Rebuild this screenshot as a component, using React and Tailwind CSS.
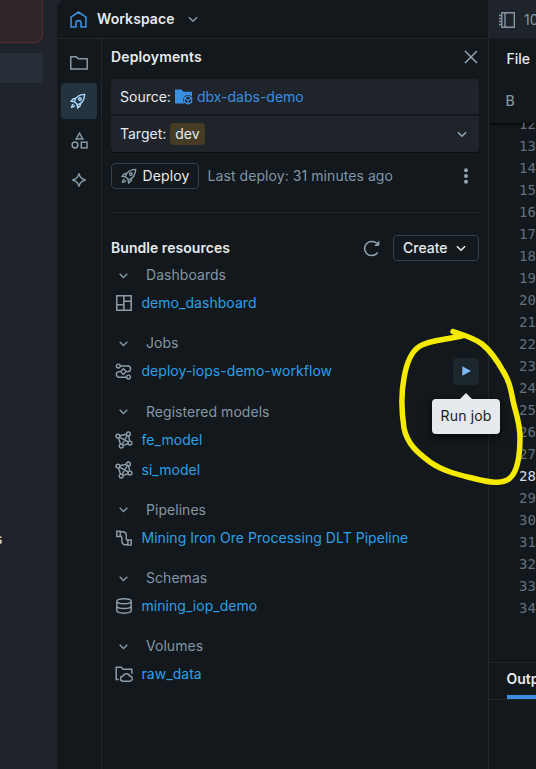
import React from "react";

function Icon({ size = 16, className = "", children, sw = 1.5, box = 16 }) {
  return (
    <svg
      width={size}
      height={size}
      viewBox={`0 0 ${box} ${box}`}
      fill="none"
      stroke="currentColor"
      strokeWidth={sw}
      className={"shrink-0 " + className}
    >
      {children}
    </svg>
  );
}

const Chevron = ({ size = 16, className = "" }) => (
  <Icon size={size} sw={1.6} className={className}>
    <path d="M3.900 6.200L8 10.200l4.100-4" />
  </Icon>
);

const Rocket = ({ className = "" }) => (
  <Icon size={16} sw={1.45} className={className}>
    <path d="M4.300 8.500C5.500 4.800 8.500 1.500 14.600 1.400c-.1 6.100-3.400 9.100-7.100 10.300z" />
    <path d="M6 5.500L3.400 5.700 1.100 8.300l3.400.6M10.500 10l-.2 2.600-2.600 2.300-.6-3.400" />
    <path d="M3.600 11.200c-1.400.4-1.900 1.600-2 3.200 1.600-.1 2.800-.6 3.200-2" />
    <circle cx="9.900" cy="6.100" r="1.300" />
  </Icon>
);

const DashboardIcon = () => (
  <Icon>
    <path d="M.8.800h14.400v14.400H.8zM7.900.800v14.400M.8 9.800h7.100M7.900 6.200h7.300" />
  </Icon>
);

const JobIcon = () => (
  <Icon size={17} box={17} sw={1.45}>
    <circle cx="3.300" cy="3" r="1.900" />
    <circle cx="13.500" cy="14" r="1.900" />
    <path d="M5.200 3h7.600a2.800 2.800 0 010 5.600h-1.600M5.600 8.600H4.200a2.800 2.800 0 000 5.600h7.400" />
    <path d="M8.400 5.800l2.800 2.800-2.800 2.800-2.800-2.800z" />
  </Icon>
);

const ModelIcon = () => (
  <Icon size={18} box={18} sw={1.45}>
    <circle cx="2.900" cy="5.100" r="1.900" />
    <circle cx="13.400" cy="2.900" r="1.900" />
    <circle cx="15" cy="12" r="1.900" />
    <circle cx="6.200" cy="15" r="1.900" />
    <path d="M4.800 4.700l6.700-1.400M13.700 4.800l.9 5.300M4.500 6.100l8.900 4.900M3.500 7l2 6.200M8 14.400l5.100-1.700M12.300 4.500L7 13.300" />
  </Icon>
);

const PipelineIcon = () => (
  <Icon sw={1.45}>
    <path d="M.8 1.300h3.400v5.200H.8zM11.900 10h3.300v5.100h-3.300z" />
    <path d="M4.200 1.700h2.300c2.600 0 3.700 1.400 3.700 3.400v3.600c0 1.100.4 1.700 1.700 1.700M4.200 6c1.300 0 1.700.6 1.700 1.700v3.300c0 2.500 1.300 3.700 3.500 3.700h2.500" />
  </Icon>
);

const SchemaIcon = () => (
  <Icon sw={1.45}>
    <ellipse cx="8" cy="3.300" rx="7.200" ry="2.500" />
    <path d="M.8 3.300v9.300c0 1.500 3.200 2.600 7.200 2.600s7.200-1.100 7.200-2.600V3.300M.8 8c0 1.500 3.200 2.500 7.200 2.500s7.200-1 7.200-2.500" />
  </Icon>
);

const VolumeIcon = () => (
  <Icon size={18} box={18} sw={1.5}>
    <path d="M3.800 14.500H1.200V2.200h5l2 2h8.600v4.500" />
    <path d="M8.300 16.200a2.600 2.600 0 01-.2-5.200 3.500 3.500 0 016.600 0 2.600 2.600 0 01-.1 5.200z" />
  </Icon>
);

const GROUPS = [
  { title: "Dashboards", icon: DashboardIcon, items: ["demo_dashboard"] },
  { title: "Jobs", icon: JobIcon, items: ["deploy-iops-demo-workflow"], run: true },
  { title: "Registered models", icon: ModelIcon, items: ["fe_model", "si_model"] },
  { title: "Pipelines", icon: PipelineIcon, items: ["Mining Iron Ore Processing DLT Pipeline"] },
  { title: "Schemas", icon: SchemaIcon, items: ["mining_iop_demo"] },
  { title: "Volumes", icon: VolumeIcon, items: ["raw_data"] },
];

const LINES = Array.from({ length: 23 }, (_, i) => i + 12);

function RunButton() {
  return (
    <div className="relative ml-auto flex h-[27px] w-[26px] items-center justify-center rounded bg-[#1b262d]">
      <svg width="9" height="10" viewBox="0 0 9 10" className="ml-px">
        <path d="M.3.200v9.600L9 5z" fill="#7cbcf8" />
      </svg>
      <div className="absolute top-[41px] left-1/2 flex h-[35px] w-[68px] -translate-x-1/2 items-center justify-center rounded bg-[#e6e9ed] tracking-[0.01em] text-[#171c21] shadow-[0_3px_10px_rgba(0,0,0,0.7)]">
        <svg width="12" height="6" viewBox="0 0 12 6" className="absolute -top-[5.500px] left-[28px]">
          <path d="M0 6l6-6 6 6z" fill="#e6e9ed" />
        </svg>
        Run job
      </div>
    </div>
  );
}

function Group({ group }) {
  const Glyph = group.icon;
  return (
    <section className="mb-[12.300px]">
      <div className="flex h-[26px] items-center pl-[5px] text-[#8396a5]">
        <Chevron size={15} />
        <span className="ml-[15px] tracking-[0.003em]">{group.title}</span>
      </div>
      {group.items.map((name) => (
        <div key={name} className="flex h-[30px] items-center">
          <span className="flex w-[25px] justify-center text-[#8d9dab]">
            <Glyph />
          </span>
          <span className="ml-[5.5px] tracking-[0.003em] text-[#2ca0ea]">{name}</span>
          {group.run && <RunButton />}
        </div>
      ))}
    </section>
  );
}

function Sidebar() {
  return (
    <aside className="relative flex w-[57px] shrink-0 flex-col bg-[#1f242c]">
      <div className="h-[43px] w-[43px] rounded-br-lg border-r border-b border-[#592a31] bg-[#30252b]" />
      <div className="mt-[10px] h-[30px] w-[43px] rounded-r bg-[#262f37]" />
      <div className="mt-[446px] -ml-[5px] text-[#dfe5ea]">s</div>
    </aside>
  );
}

function Rail() {
  return (
    <nav className="flex w-[45px] shrink-0 flex-col items-center border-r border-[#20272d] pt-[4px] text-[#8599a8]">
      <div className="flex h-[40px] w-9 items-center justify-center pb-px">
        <Icon size={18} sw={1.500} box={18}>
          <path d="M.8 15V2.800h5.500l1.900 2h9V15z" />
        </Icon>
      </div>
      <div className="flex h-9 w-9 items-center justify-center rounded bg-[#233340] pr-[2px] text-[#a9d7fc]">
        <Rocket />
      </div>
      <div className="mt-[2px] flex h-[38px] w-9 items-center justify-center">
        <Icon size={17} sw={1.500} box={17}>
          <path d="M8.500 1.200l3.300 5.700H5.200z" />
          <circle cx="4" cy="13" r="2.900" />
          <rect x="10.300" y="10.200" width="5.700" height="5.700" />
        </Icon>
      </div>
      <div className="mt-px flex h-10 w-9 items-center justify-center">
        <Icon sw={1.500}>
          <path d="M8 1.300c.6 3.600 2.300 5.800 6.700 6.700-4.400.9-6.100 3.100-6.700 6.700C7.400 11.100 5.700 8.900 1.300 8 5.700 7.100 7.400 4.900 8 1.300z" />
        </Icon>
      </div>
    </nav>
  );
}

function Deployments() {
  return (
    <div className="min-w-0 flex-1 pr-[9px] pl-[9px]">
      <div className="flex h-[40px] items-center justify-between pb-[4px] text-[#e6ebf0]">
        <h2 className="font-semibold tracking-[0.01em]">Deployments</h2>
        <Icon size={16} sw={1.500} className="text-[#91a5b5]">
          <path d="M2 2l12 12M14 2L2 14" />
        </Icon>
      </div>
      <div className="flex h-[35px] items-center rounded-t bg-[#1f242b] px-[9px] text-[#e6ebf0]">
        Source:
        <svg width="18" height="16" viewBox="0 0 18 16" className="ml-[4.500px] shrink-0">
          <path d="M0 .5h6.500l2 2.300H17v11.700H0z" fill="#3b8fe0" />
          <circle cx="13" cy="11" r="5" fill="#1f242b" />
          <g fill="none" stroke="#3b8fe0" strokeWidth="1.300">
            <path d="M13 7l3.600 2v4L13 15l-3.600-2V9z" />
            <path d="M9.500 9.200l3.500 2 3.500-2M13 11v4" />
          </g>
        </svg>
        <span className="ml-[3.500px] text-[#3b8fe0]">dbx-dabs-demo</span>
      </div>
      <div className="mt-[2px] flex h-[36px] items-center rounded-b bg-[#1f242b] pr-[9px] pl-[9px] text-[#e6ebf0] shadow-[0_1px_0_#090d0f]">
        Target:
        <span className="ml-[4px] flex h-[22px] items-center rounded bg-[#453c23] px-[5px]">dev</span>
        <Chevron className="ml-auto text-[#92a4b3]" />
      </div>
      <div className="mt-[11px] flex h-[26px] items-center">
        <div className="flex h-[26px] w-[88px] items-center rounded border border-[#33404b] pl-[9px] text-[#e6ebf0]">
          <Rocket className="text-[#8599a8]" />
          <span className="ml-[5.500px] tracking-[0.01em]">Deploy</span>
        </div>
        <span className="ml-[8.500px] whitespace-nowrap tracking-[0.005em] text-[#8396a5]">Last deploy: 31 minutes ago</span>
        <svg width="16" height="16" viewBox="0 0 16 16" fill="#91a5b5" className="mr-[5px] ml-auto">
          <circle cx="8" cy="2.300" r="2" />
          <circle cx="8" cy="8" r="2" />
          <circle cx="8" cy="13.700" r="2" />
        </svg>
      </div>
      <div className="mt-[23px] h-px bg-[#20272d]" />
      <div className="mt-[22px] flex h-[26px] items-center">
        <h2 className="font-semibold tracking-[0.003em] text-[#e6ebf0]">Bundle resources</h2>
        <Icon size={17} box={17} sw={1.500} className="mr-[13px] ml-auto text-[#91a5b5]">
          <path d="M15.600 5.300H11.800M15.600 1.300v4M15.300 5C14 2.800 11.500 1.400 8.800 1.400a7.100 7.100 0 105.900 11" />
        </Icon>
        <div className="flex h-[26px] w-[86px] items-center rounded border border-[#33404b] pl-[9px] text-[#e6ebf0]">
          <span className="font-medium">Create</span>
          <Chevron className="ml-[5px]" />
        </div>
      </div>
      <div className="mt-px">
        {GROUPS.map((g) => (
          <Group key={g.title} group={g} />
        ))}
      </div>
    </div>
  );
}

function Editor() {
  return (
    <div className="flex w-[48px] shrink-0 flex-col overflow-hidden border-l border-[#20272d]">
      <div className="flex h-[39px] shrink-0 items-center bg-[#1f242b] pl-[9px] text-[#8396a5]">
        <Icon size={18} box={18} sw={1.400}>
          <path d="M3.800 1.700h12.500v14.600H3.800zM7 1.700v14.600M1 4.500h3M1 7.500h3M1 10.500h3M1 13.500h3" />
        </Icon>
        <span className="ml-[8px] whitespace-nowrap">10_</span>
      </div>
      <div className="flex h-[84px] shrink-0 flex-col shadow-[0_1px_3px_#000]">
        <div className="flex h-[40px] items-center pl-[17.500px] font-medium text-[#e6ebf0]">File</div>
        <div className="flex h-[43px] items-center pl-[16.500px] font-medium text-[#8396a5]">B</div>
      </div>
      <div className="h-[539px] shrink-0 overflow-hidden pl-[30px] font-['DejaVu_Sans_Mono',monospace] text-[14px] text-[#646f7b]">
        <div className="-mt-[10px]">
          {LINES.map((n) => (
            <div key={n} className={n === 28 ? "h-[22px] leading-[22px] text-[#d7dce0]" : "h-[22px] leading-[22px]"}>
              {n}
            </div>
          ))}
        </div>
      </div>
      <div className="flex h-[38px] shrink-0 border-t border-b border-[#20272d] pl-[17.500px]">
        <div className="flex h-[36px] shrink-0 items-center border-b-4 border-[#3b8fe0] font-semibold text-[#e6ebf0]">Output</div>
      </div>
    </div>
  );
}

export default function App() {
  return (
    <div className="relative flex h-[769px] w-[536px] overflow-hidden bg-[#1f242c] font-['Inter','Liberation_Sans',sans-serif] text-[14px] leading-5">
      <Sidebar />
      <div className="flex min-w-0 flex-1 overflow-hidden rounded-tl-lg bg-[#12181b]">
        <main className="flex w-[431px] shrink-0 flex-col">
          <header className="flex h-[39px] items-center border-b border-[#20272d] pl-[13px]">
            <Icon size={17} sw={1.500} className="text-[#3b8fe0]">
              <path d="M1 15V5.800L8 1l7 4.800V15h-4.600v-3.500a2.400 2.400 0 00-4.800 0V15z" />
            </Icon>
            <span className="ml-[10px] font-semibold tracking-[0.005em] text-[#e6ebf0]">Workspace</span>
            <Chevron className="ml-[10px] text-[#8599a8]" />
          </header>
          <div className="flex flex-1">
            <Rail />
            <Deployments />
          </div>
        </main>
        <Editor />
      </div>
      <svg width="536" height="769" viewBox="0 0 536 769" className="pointer-events-none absolute inset-0">
        <path
          d="M453 331.500L463 335.500C446 340 430 340 420 346C410 352 406 366 404 378C401 394 402 415 404 428C407 444 418 453 430 462C444 472 462 475.500 474 478.500C488 482 503 485 510 478C518 471 520 455 520 437C520 424 516 413 513.500 403C511 391 510 382 503 371C498 362 492 352 482 344C474 338 464 335 453 331.500"
          fill="none"
          stroke="#f5eb00"
          strokeWidth="5.500"
          strokeLinecap="round"
          strokeLinejoin="round"
        />
      </svg>
    </div>
  );
}
